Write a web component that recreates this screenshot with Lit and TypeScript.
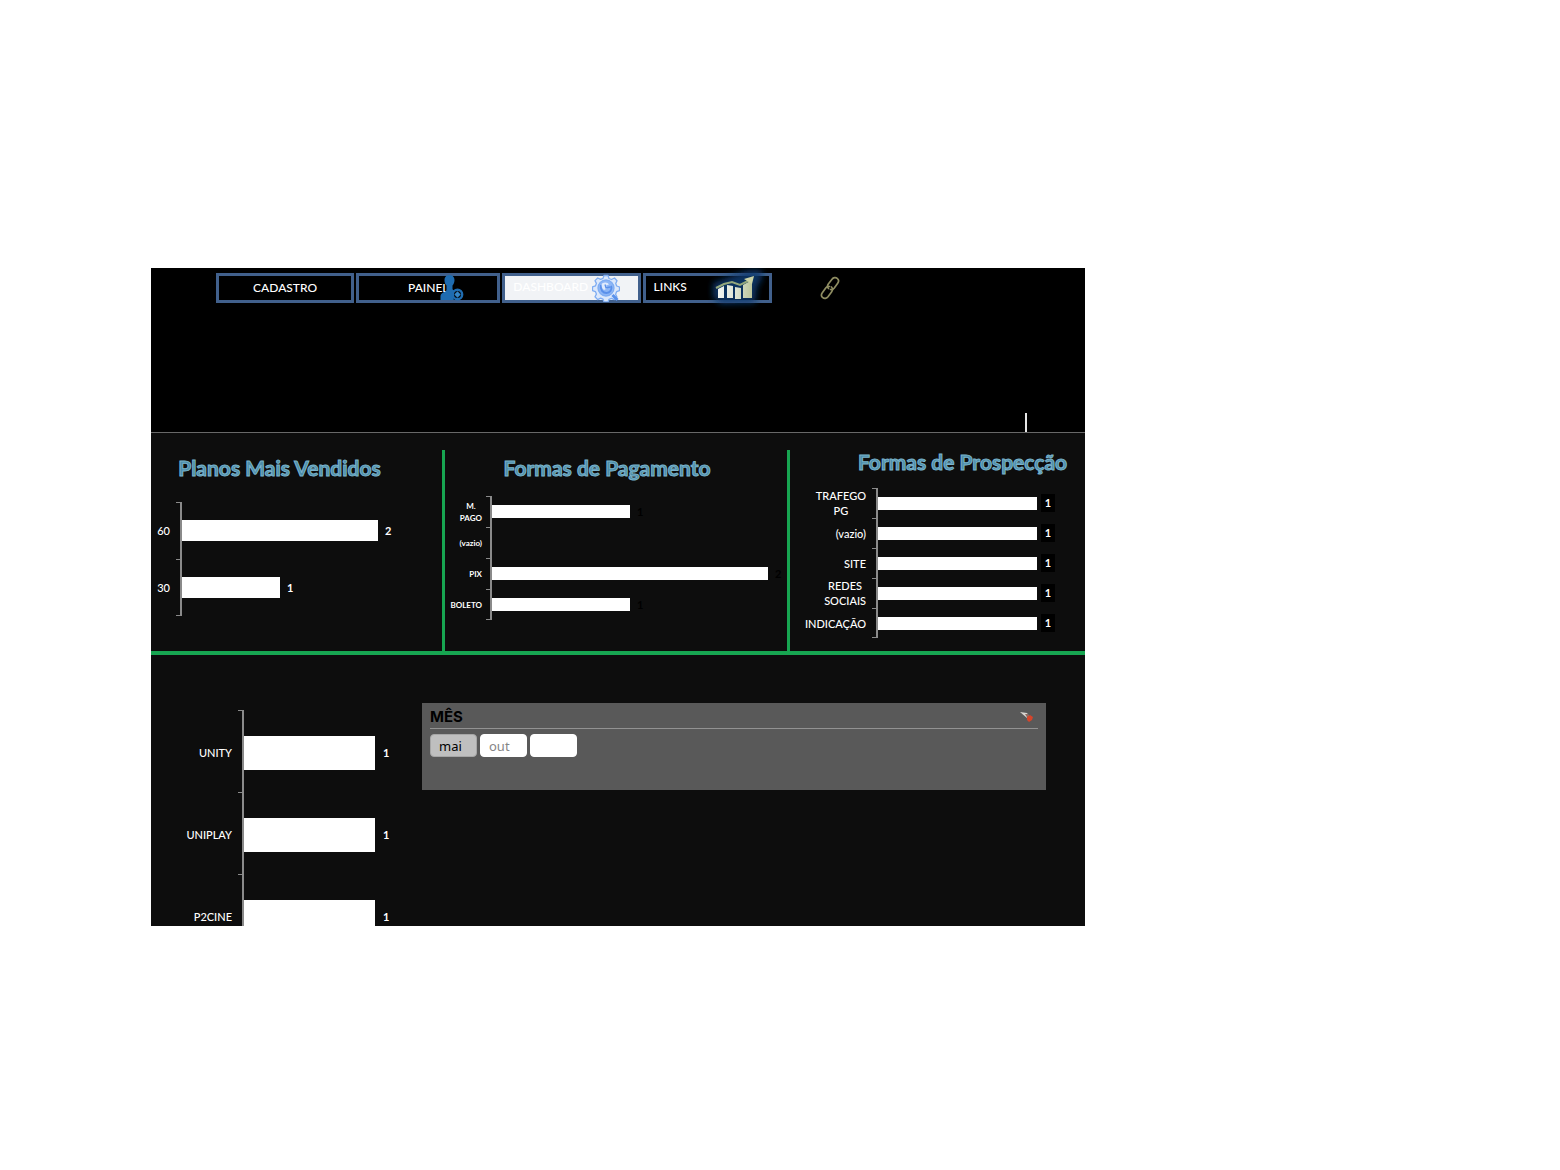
import { LitElement, html, css, svg, nothing } from "lit";
import { customElement, state } from "lit/decorators.js";

interface Bar {
  label: string[];
  value: number;
}

interface Chart {
  id: string;
  title: string;
  max: number;
  bars: Bar[];
}

const PLANS: Chart = {
  id: "plans",
  title: "Planos Mais Vendidos",
  max: 2,
  bars: [
    { label: ["60"], value: 2 },
    { label: ["30"], value: 1 },
  ],
};

const PAYMENTS: Chart = {
  id: "payments",
  title: "Formas de Pagamento",
  max: 2,
  bars: [
    { label: ["M.", "PAGO"], value: 1 },
    { label: ["(vazio)"], value: 0 },
    { label: ["PIX"], value: 2 },
    { label: ["BOLETO"], value: 1 },
  ],
};

const SOURCES: Chart = {
  id: "sources",
  title: "Formas de Prospecção",
  max: 1,
  bars: [
    { label: ["TRAFEGO", "PG"], value: 1 },
    { label: ["(vazio)"], value: 1 },
    { label: ["SITE"], value: 1 },
    { label: ["REDES", "SOCIAIS"], value: 1 },
    { label: ["INDICAÇÃO"], value: 1 },
  ],
};

const SERVERS: Chart = {
  id: "servers",
  title: "",
  max: 1,
  bars: [
    { label: ["UNITY"], value: 1 },
    { label: ["UNIPLAY"], value: 1 },
    { label: ["P2CINE"], value: 1 },
  ],
};

const userIcon = svg`<svg class="icon user" viewBox="0 0 24 27" aria-hidden="true">
  <path fill="#1f6cb0" d="M9.500 0c3.200 0 5 2.200 5 5.200 0 2.200-1 4-2 5.200v3.300c0 1.500 2 1.800 3.500 2.600l-3 3.200v3.500l1 2H0.500v-3c0-3.200 1.500-4 4-5 1.200-.5 2-1 2-2.200v-4.400C5.200 9.200 4.500 7.500 4.500 5.200 4.500 2.200 6.300 0 9.500 0z"/>
  <circle cx="17.500" cy="19.500" r="4.700" fill="#050a10" stroke="#1f6cb0" stroke-width="2.400"/>
  <path fill="#3486c8" d="M17.500 16.300l3.200 3.200-3.200 3.200-3.200-3.200z"/>
</svg>`;

const gearIcon = svg`<svg class="icon gear" viewBox="0 0 28 28" aria-hidden="true">
  <g fill="none" stroke="#7fadf2" stroke-width="1.300" stroke-linejoin="round">
    <path fill="#dce8fb" d="M12 1.500h4l1 3 2.500 1 3-1.500 2.500 2.700-1.300 2.900 1 2.400 2.800 1v3.700l-2.900 1-1 2.500 1.400 2.800-2.700 2.600-2.800-1.300-2.500 1-1 2.700h-4l-1-2.800-2.400-1-2.900 1.400L3 22.800l1.400-2.700-1-2.500-2.900-1v-3.700l2.900-1 1-2.500L3 6.600 5.700 4l2.900 1.300L11 4.400z"/>
    <circle cx="14" cy="14" r="8" fill="#8db6f6"/>
  </g>
  <path fill="none" stroke="#5a90ea" stroke-width="2" d="M9 11c-1 5 2 8 5.500 8s6-3.500 4.500-7"/>
  <path fill="#dfeafc" d="M10 9.500c3-2 6-1 7 1l-3 1 1 3-3 1.500c-2-1.500-3-4-2-6.500z"/>
  <path fill="none" stroke="#5a90ea" stroke-width="1.300" d="M13 10.500l1 3.500 4-1"/>
  <path stroke="#5a92ec" stroke-width="3" d="M20.500 21l5 5"/>
</svg>`;

const growthIcon = svg`<svg class="icon growth" viewBox="0 0 62 42" aria-hidden="true">
  <defs>
    <filter id="glow" x="-30%" y="-30%" width="160%" height="160%"><feGaussianBlur stdDeviation="3"/></filter>
    <linearGradient id="metal" gradientUnits="userSpaceOnUse" x1="10" y1="0" x2="46" y2="0">
      <stop offset="0" stop-color="#f1f5f3"/><stop offset=".5" stop-color="#dfe5d6"/><stop offset="1" stop-color="#b9c398"/>
    </linearGradient>
  </defs>
  <path filter="url(#glow)" fill="#0c3a70" opacity=".85" d="M6 16l21-8L41 3l14 0 0 9-5 8-2 16-34 1-8-7z"/>
  <path fill="url(#metal)" d="M11 22l6-3v12h-6zM20 18l6 1v12h-6zM28 20l6 1v11h-6zM36 18l9-5v18h-9z"/>
  <path fill="none" stroke="#93a77d" stroke-width="2" d="M9 21l8-4 8-2 8 3 12-6"/>
  <path fill="#cbd3a6" d="M37 12l10-3-2 8z"/>
</svg>`;

const chainIcon = svg`<svg class="chain-icon" viewBox="0 0 20 24" aria-hidden="true">
  <g fill="none" stroke="#8f8d62" stroke-width="1.700" stroke-linejoin="round" stroke-linecap="round">
    <path d="M8.500 12.500c-1.500-1.500-1.300-3 0-4.800l3.500-4.500c1.300-1.700 3.800-2 5.200-.9 1.500 1.200 1.700 3.200.5 4.900l-3.600 5c-1 1.300-2.200 1.600-3.600 1.300"/>
    <path d="M11.500 11c1.500 1.500 1.300 3.200 0 5l-3.500 4.800c-1.300 1.700-3.800 2-5.200.9-1.500-1.200-1.700-3.200-.5-4.900l3.600-5c1-1.300 2.200-1.600 3.600-1.300"/>
  </g>
</svg>`;

@customElement("app-root")
export class AppRoot extends LitElement {
  @state() private month = "mai";

  static styles = css`
    :host {
      display: block;
      font-family: Lato, "Open Sans", sans-serif;
      font-size: 12px;
      line-height: 16px;
      color: #fff;
    }
    * {
      box-sizing: border-box;
    }
    .page {
      display: grid;
      grid-template-columns: 151fr 934fr 475fr;
      padding: 268px 0 244px;
      background: #fff;
    }
    .board {
      grid-column: 2;
      min-width: 0;
      background: #0d0d0d;
      overflow: hidden;
    }
    .top {
      display: flex;
      flex-direction: column;
      justify-content: space-between;
      min-height: 165px;
      padding-top: 5px;
      background: #000;
      border-bottom: 1px solid #686868;
    }
    .nav {
      display: grid;
      grid-template-columns: 139fr 145fr 139fr 130fr 44fr 267fr;
      gap: 2px;
      padding-left: 65px;
      align-items: center;
    }
    .tab {
      position: relative;
      display: flex;
      align-items: center;
      justify-content: center;
      height: 30px;
      border: 3px solid #41608c;
      color: #fff;
      font-weight: 500;
      text-decoration: none;
    }
    .tab.start {
      justify-content: flex-start;
      padding: 0 0 2px 8px;
    }
    .tab.current {
      background: #f1f3f6;
    }
    .icon {
      position: absolute;
    }
    .user {
      width: 24px;
      height: 27px;
      right: 33px;
      top: -1px;
    }
    .gear {
      width: 28px;
      height: 28px;
      right: 18px;
      top: -2px;
    }
    .growth {
      width: 62px;
      height: 42px;
      right: 0;
      top: -9px;
    }
    .chain {
      grid-column: 6;
      justify-self: start;
      display: flex;
    }
    .chain-icon {
      width: 20px;
      height: 24px;
    }
    .caret {
      width: 2px;
      height: 19px;
      margin-left: 93.600%;
      background: #e6e6e6;
    }
    .panels {
      display: grid;
      grid-template-columns: 291fr 345fr 298fr;
      padding-top: 17px;
      border-bottom: 4px solid #17a551;
    }
    .panel {
      display: flex;
      flex-direction: column;
      min-height: 201px;
      min-width: 0;
      padding-top: 6px;
    }
    .panel + .panel {
      border-left: 3px solid #17a551;
    }
    .title {
      margin: 0;
      font-size: 21px;
      line-height: 24px;
      font-weight: 700;
      text-align: center;
      white-space: nowrap;
      color: #4d8ca8;
      -webkit-text-stroke: 1px #7ab4cc;
    }
    .panel.plans .title {
      padding-right: 34px;
    }
    .panel.payments .title {
      padding-right: 18px;
    }
    .panel.sources {
      padding-top: 0;
    }
    .panel.sources .title {
      padding-left: 50px;
    }
    .chart {
      display: flex;
      flex-direction: column;
      list-style: none;
      margin: 0;
      padding: 0;
      font-weight: 500;
    }
    .row {
      display: flex;
      align-items: stretch;
    }
    .label {
      display: flex;
      align-items: center;
      justify-content: flex-end;
      flex: none;
      text-align: center;
    }
    .line {
      display: block;
    }
    .tick {
      flex: none;
      width: 6px;
      border-top: 1px solid #8a8a8a;
      border-right: 2px solid #8a8a8a;
    }
    .row:last-child .tick {
      border-bottom: 1px solid #8a8a8a;
    }
    .plot {
      display: flex;
      align-items: center;
      flex: 1;
      min-width: 0;
    }
    .bar {
      flex: none;
      background: #fff;
    }
    .value {
      flex: none;
      margin-left: 7px;
      font-weight: 700;
    }
    .chart.plans {
      margin-top: 22px;
      padding-right: 64px;
      font-size: 11px;
    }
    .plans .row {
      height: 57px;
    }
    .plans .label {
      width: 25px;
      padding-right: 6px;
    }
    .plans .bar {
      height: 21px;
    }
    .chart.payments {
      margin-top: 16px;
      padding-right: 19px;
      font-size: 8px;
      line-height: 12px;
      font-weight: 700;
    }
    .payments .row {
      height: 31px;
    }
    .payments .label {
      width: 41px;
      padding-right: 4px;
    }
    .payments .bar {
      height: 13px;
    }
    .payments .value {
      color: #000;
      font-size: 11px;
    }
    .chart.sources {
      margin-top: 14px;
      padding-right: 48px;
      font-size: 11px;
      line-height: 15px;
    }
    .sources .row {
      height: 30px;
    }
    .sources .label {
      width: 82px;
      padding-right: 6px;
    }
    .sources .bar {
      height: 13px;
    }
    .sources .value {
      margin-left: 4px;
      width: 14px;
      height: 18px;
      line-height: 18px;
      text-align: center;
      background: #000;
    }
    .bottom {
      display: grid;
      grid-template-columns: 271fr 624fr 39fr;
      align-items: start;
      height: 271px;
      overflow: hidden;
      padding-top: 48px;
    }
    .chart.servers {
      margin-top: 7px;
      padding-right: 47px;
      font-size: 11px;
    }
    .servers .row {
      height: 82px;
    }
    .servers .label {
      width: 87px;
      padding: 3px 6px 0 0;
    }
    .servers .plot {
      padding-top: 3px;
    }
    .servers .bar {
      height: 34px;
    }
    .servers .value {
      margin-left: 8px;
    }
    .slicer {
      min-height: 87px;
      margin: 0;
      padding: 3px 8px;
      background: #595959;
      color: #000;
    }
    .slicer-head {
      display: flex;
      align-items: center;
      justify-content: space-between;
      height: 23px;
      border-bottom: 1px solid #929292;
    }
    .slicer-title {
      margin: 0;
      font-family: Inter, "Noto Sans", sans-serif;
      font-size: 15px;
      line-height: 20px;
      font-weight: 700;
    }
    .clear {
      display: flex;
      padding: 0 4px 0 0;
      border: 0;
      background: none;
    }
    .clear-icon {
      width: 14px;
      height: 12px;
    }
    .months {
      display: flex;
      gap: 3px;
      padding-top: 5px;
    }
    .month {
      width: 47px;
      height: 23px;
      padding: 0 8px;
      border: 1px solid #fff;
      border-radius: 4px;
      background: #fff;
      color: #858585;
      font-family: "Noto Sans", sans-serif;
      font-size: 13px;
      line-height: 20px;
      text-align: left;
    }
    .month.on {
      background: #bfbfbf;
      border-color: #a6a6a6;
      color: #000;
    }
  `;

  private chart(c: Chart) {
    return html`<ul class="chart ${c.id}">
      ${c.bars.map(
        (b) => html`<li class="row">
          <span class="label"><span>${b.label.map((l) => html`<span class="line">${l}</span>`)}</span></span>
          <span class="tick"></span>
          <span class="plot">
            ${b.value
              ? html`<span class="bar" style="width:${(b.value / c.max) * 100}%"></span><span class="value">${b.value}</span>`
              : nothing}
          </span>
        </li>`
      )}
    </ul>`;
  }

  render() {
    return html`<div class="page">
      <main class="board">
        <header class="top">
          <nav class="nav">
            <a class="tab" href="#cadastro">CADASTRO</a>
            <a class="tab" href="#painel">PAINEL${userIcon}</a>
            <a class="tab start current" href="#dashboard" aria-current="page">DASHBOARD${gearIcon}</a>
            <a class="tab start" href="#links">LINKS${growthIcon}</a>
            <a class="chain" href="#link" aria-label="Link">${chainIcon}</a>
          </nav>
          <div class="caret"></div>
        </header>
        <div class="panels">
          ${[PLANS, PAYMENTS, SOURCES].map(
            (c) => html`<section class="panel ${c.id}">
              <h2 class="title">${c.title}</h2>
              ${this.chart(c)}
            </section>`
          )}
        </div>
        <div class="bottom">
          ${this.chart(SERVERS)}
          <section class="slicer">
            <div class="slicer-head">
              <h3 class="slicer-title">MÊS</h3>
              <button class="clear" aria-label="Limpar filtro" @click=${() => (this.month = "")}>
                <svg class="clear-icon" viewBox="0 0 14 12" aria-hidden="true">
                  <path fill="#d9d5d0" d="M0 1l7 1 2 3-2 2z" />
                  <path fill="#8d6b62" d="M5 3l3 0 2 3-2 2z" />
                  <path fill="#d4452b" d="M7 6l3-2 3 2-1 3-3 2-2-2z" />
                </svg>
              </button>
            </div>
            <div class="months">
              ${["mai", "out", ""].map(
                (m) => html`<button
                  class="month ${m && m === this.month ? "on" : ""}"
                  aria-label=${m || "vazio"}
                  @click=${() => (this.month = m)}
                >${m}</button>`
              )}
            </div>
          </section>
        </div>
      </main>
    </div>`;
  }
}
